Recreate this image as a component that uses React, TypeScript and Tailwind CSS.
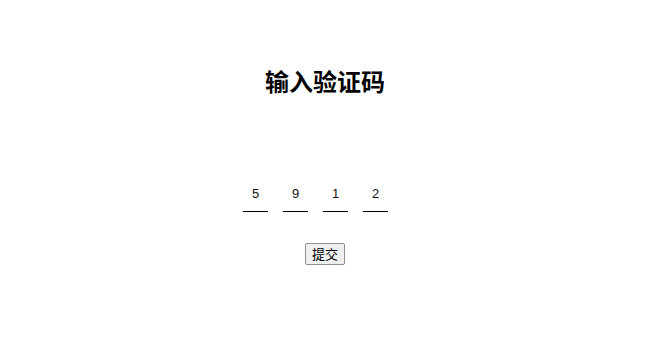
export default function App() {
  const digits = ['5', '9', '1', '2'];

  return (
    <div className="min-h-[352px] bg-white font-['Noto_Sans_CJK_SC','Liberation_Sans',sans-serif] text-black">
      <h1 className="pt-[66px] text-center text-[24px] font-bold leading-[30px]">输入验证码</h1>

      {/* Code inputs */}
      <div className="mt-[85px] flex justify-center gap-[15px] pr-[19px]">
        {digits.map((d, i) => (
          <div
            key={i}
            className="flex h-[31px] w-[25px] items-end justify-center border-b border-black pb-[10px] font-['Liberation_Sans',sans-serif] text-[13px] leading-[15px] text-[#111]"
          >
            {d}
          </div>
        ))}
      </div>

      <div className="mt-[31px] flex justify-center">
        <button className="h-[22px] rounded-[2px] border border-[#8f8f8f] bg-[#efefef] px-[6px] text-[13px] leading-[18px]">
          提交
        </button>
      </div>
    </div>
  );
}
